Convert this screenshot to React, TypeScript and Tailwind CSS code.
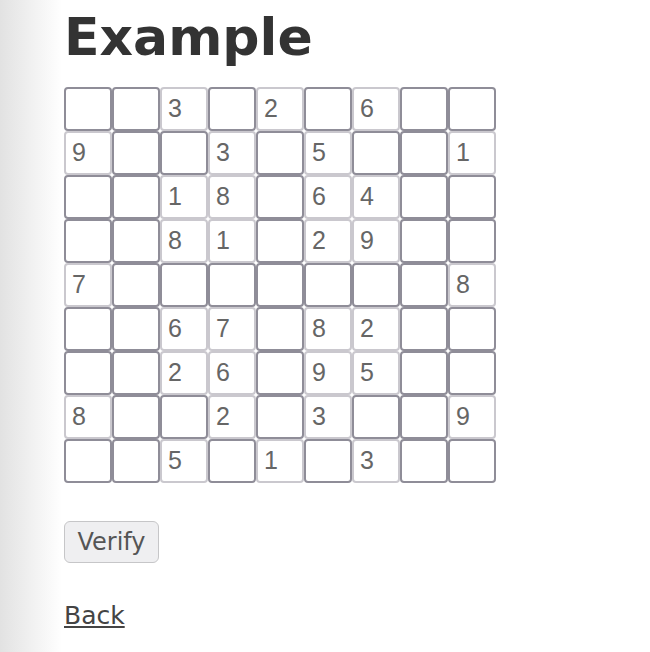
const puzzle = [
  '__3_2_6__',
  '9__3_5__1',
  '__18_64__',
  '__81_29__',
  '7_______8',
  '__67_82__',
  '__26_95__',
  '8__2_3__9',
  '__5_1_3__',
];

const Cell = ({ value }: { value: string }) => {
  const given = value !== '_';
  return (
    <div
      className={`box-border flex h-[44px] w-[48px] items-center rounded-[4px] border-2 bg-white pl-[6px] font-['Liberation_Sans',Arial,sans-serif] text-[25px] text-[#666] ${
        given ? 'border-[#cac8ce]' : 'border-[#8f8d98]'
      }`}
    >
      {given ? value : ''}
    </div>
  );
};

export default function App() {
  return (
    <div className="min-h-[652px] bg-[linear-gradient(to_right,#e2e2e2,#ffffff_62px)] pl-[64px] pt-[7px] font-['DejaVu_Sans',Verdana,sans-serif]">
      <h1 className="text-[52px] leading-[60px] font-bold text-[#333]">Example</h1>

      <div className="mt-[20px] flex flex-col">
        {puzzle.map((row, r) => (
          <div key={r} className="flex">
            {row.split('').map((v, c) => (
              <Cell key={c} value={v} />
            ))}
          </div>
        ))}
      </div>

      <button
        type="button"
        className="mt-[38px] box-border h-[42px] w-[95px] rounded-[6px] border border-[#c6c6c8] bg-[#efeff1] text-[24px] leading-[28px] text-[#555]"
      >
        Verify
      </button>

      <div className="mt-[38px]">
        <a href="#" className="text-[25px] leading-[30px] text-[#444] underline">
          Back
        </a>
      </div>
    </div>
  );
}
